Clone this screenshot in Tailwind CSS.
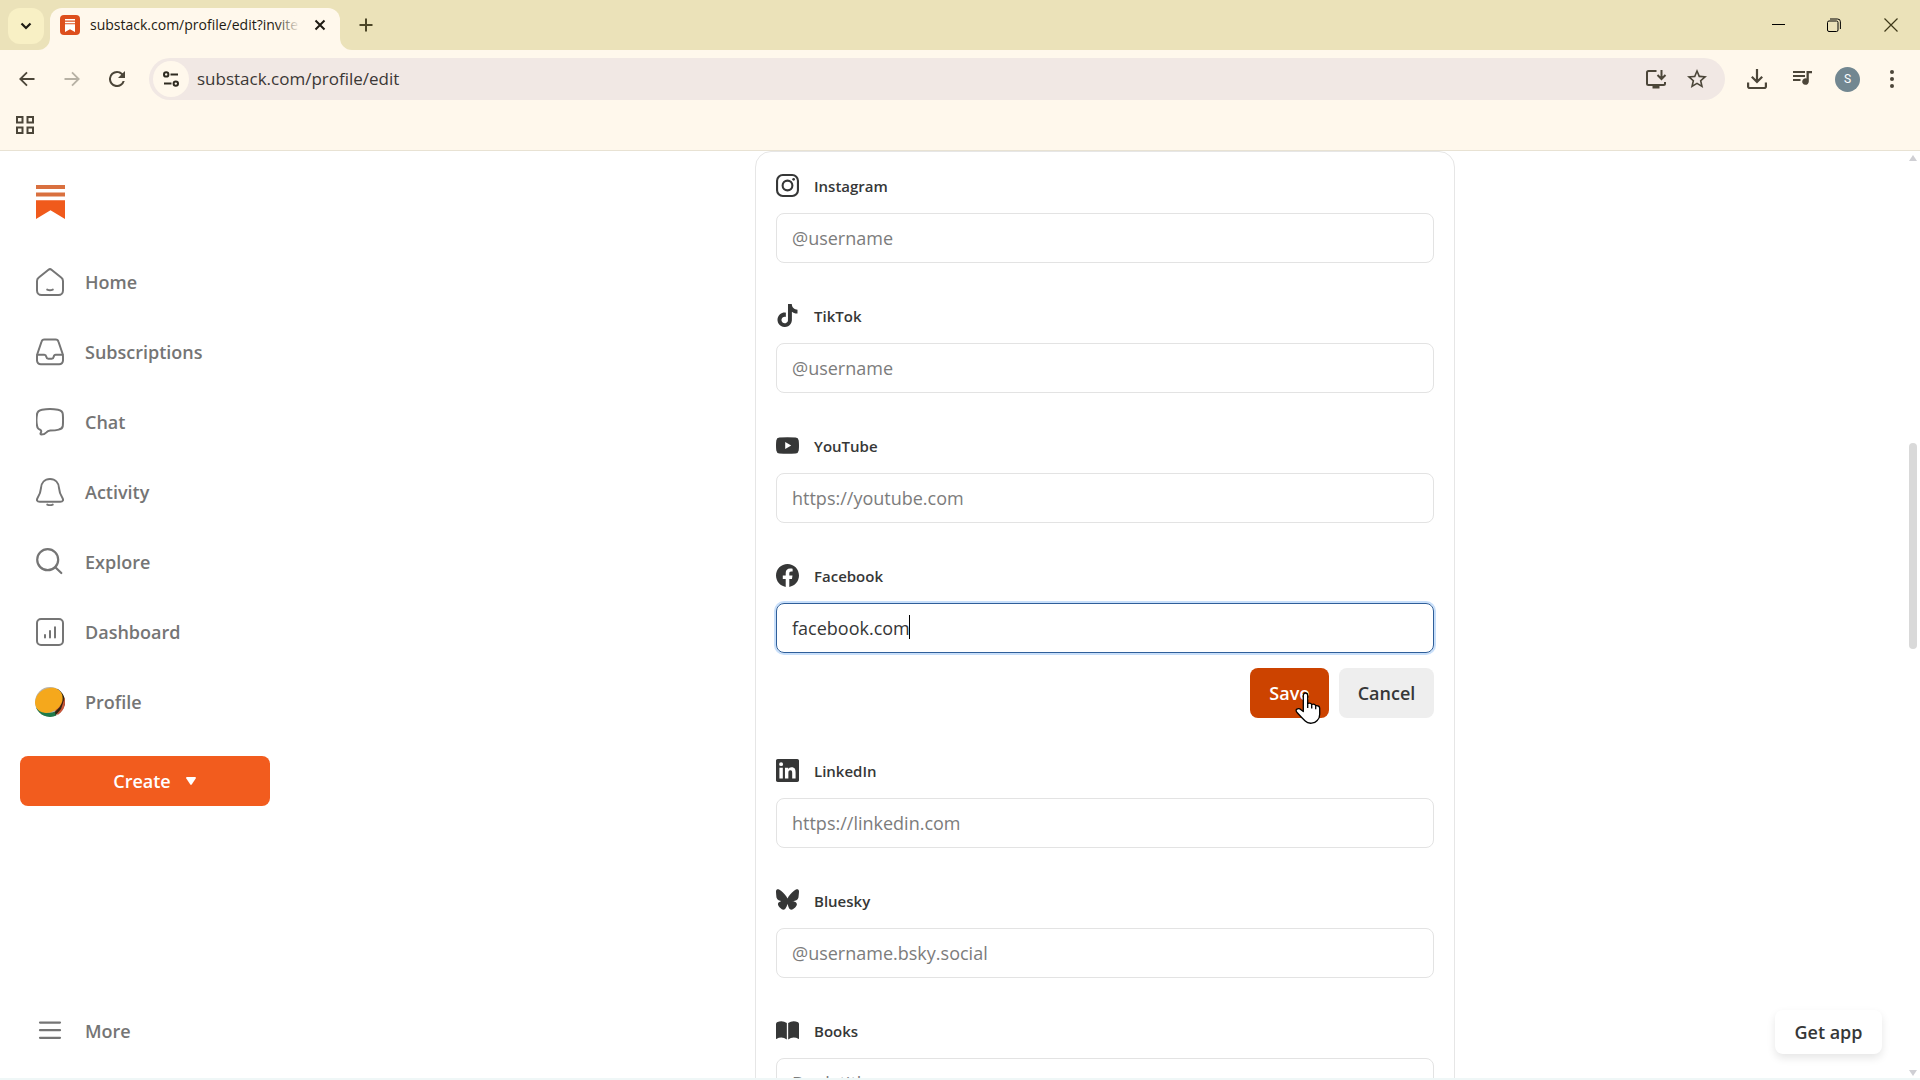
<!DOCTYPE html>
<html lang="en">
<head>
  <meta charset="UTF-8">
  <meta name="viewport" content="width=device-width, initial-scale=1.0">
  <title>Edit profile - Substack</title>
  <script src="https://cdn.jsdelivr.net/npm/@tailwindcss/browser@4"></script>
</head>
<body class="flex flex-col h-screen overflow-hidden bg-white text-[#363737] font-['Open_Sans',sans-serif]">
  <!-- Tab strip -->
  <div class="flex items-end h-[50px] shrink-0 bg-[#ebe2b9] text-[#1e1b13]">
    <button aria-label="Search tabs" class="flex items-center justify-center w-9 h-9 ml-2 mb-[6px] rounded-xl bg-[#f8f0c5]">
      <svg class="w-3 h-3" viewBox="0 0 12 12" fill="none" stroke="currentColor" stroke-width="2.2"><path d="M1.5 3.5 6 8l4.500-4.500"/></svg>
    </button>
    <div class="relative flex items-center h-[42px] w-[290px] ml-[6px] px-[10px] pb-2 rounded-t-xl bg-[#fff8ec]">
      <!-- Curved feet of the active tab -->
      <svg class="absolute bottom-0 -left-3 w-3 h-3" viewBox="0 0 12 12" fill="#fff8ec"><path d="M12 0v12H0A12 12 0 0 0 12 0z"/></svg>
      <svg class="absolute bottom-0 -right-3 w-3 h-3" viewBox="0 0 12 12" fill="#fff8ec"><path d="M0 0v12h12A12 12 0 0 1 0 0z"/></svg>
      <svg class="w-5 h-5 shrink-0" viewBox="0 0 20 20"><rect width="20" height="20" rx="4" fill="#dd4f1d"/><path d="M5 4h10v1.500H5zM5 6.700h10v1.500H5zM5 9.300h10V17l-5-2.800L5 17z" fill="#fff"/></svg>
      <div class="relative w-[210px] ml-[10px] text-sm whitespace-nowrap overflow-hidden">substack.com/profile/edit?invite
        <span class="absolute inset-y-0 right-0 w-6 bg-linear-to-r from-[#fff8ec]/0 to-[#fff8ec]"></span>
      </div>
      <button aria-label="Close tab" class="flex items-center justify-center w-5 h-5 ml-[10px]">
        <svg class="w-3 h-3" viewBox="0 0 12 12" stroke="currentColor" stroke-width="2"><path d="M1.500 1.500l9 9M10.500 1.500l-9 9"/></svg>
      </button>
    </div>
    <button aria-label="New tab" class="flex items-center justify-center w-9 h-9 ml-2 mb-[7px]">
      <svg class="w-[14px] h-[14px]" viewBox="0 0 14 14" stroke="#4c4628" stroke-width="2"><path d="M7 .5v13M.5 7h13"/></svg>
    </button>
    <div class="flex items-center h-full ml-auto text-black">
      <button aria-label="Minimize" class="flex items-center justify-center w-14 h-12"><svg class="w-[13px] h-[13px]" viewBox="0 0 13 13" stroke="currentColor"><path d="M0 5.500h13"/></svg></button>
      <button aria-label="Restore" class="flex items-center justify-center w-14 h-12"><svg class="w-[14px] h-[14px]" viewBox="0 0 14 14" fill="none" stroke="currentColor"><rect x=".5" y="3" width="10.500" height="10.500" rx="1.500"/><path d="M3 1h7.500A2.800 2.800 0 0 1 13.400 3.800V11"/></svg></button>
      <button aria-label="Close" class="flex items-center justify-center w-[58px] h-12"><svg class="w-[14px] h-[14px]" viewBox="0 0 14 14" stroke="#3e3818" stroke-width="1.200"><path d="M.5.5l13 13M13.500.5l-13 13"/></svg></button>
    </div>
  </div>

  <!-- Toolbar -->
  <div class="flex items-center h-[58px] shrink-0 pl-[13px] pr-4 bg-[#fff8ec] text-[#4c4639]">
    <button aria-label="Back" class="w-7 h-7 flex items-center justify-center"><svg class="w-4 h-4" viewBox="0 0 16 16" fill="none" stroke="currentColor" stroke-width="1.800"><path d="M15.500 8H1.800M8 1.300 1.300 8 8 14.700"/></svg></button>
    <button aria-label="Forward" class="w-7 h-7 ml-[17px] flex items-center justify-center"><svg class="w-4 h-4" viewBox="0 0 16 16" fill="none" stroke="#b7b1a4" stroke-width="1.800"><path d="M.5 8h13.700M8 1.300 14.700 8 8 14.700"/></svg></button>
    <button aria-label="Reload" class="w-7 h-7 ml-[17px] flex items-center justify-center"><svg class="w-4 h-4" viewBox="4 4 16 16" fill="currentColor"><path d="M17.650 6.350A7.958 7.958 0 0 0 12 4a8 8 0 1 0 7.730 10h-2.080A6 6 0 1 1 12 6c1.660 0 3.140.69 4.220 1.780L13 11h7V4l-2.350 2.350z"/></svg></button>
    <div class="flex items-center flex-1 h-[42px] ml-[18px] pl-1 pr-[18px] rounded-full bg-[#f1e8e4]">
      <button aria-label="Site information" class="flex items-center justify-center w-9 h-9 rounded-full bg-[#fff8ec]">
        <svg class="w-4 h-4" viewBox="0 0 16 16" fill="none" stroke="#2e2a20" stroke-width="2"><circle cx="3.200" cy="3.400" r="2.200"/><path d="M7.500 3.400H15M1 12.600h7.500"/><circle cx="12.800" cy="12.600" r="2.200"/></svg>
      </button>
      <label for="address" class="sr-only">Address</label>
      <input id="address" type="text" value="substack.com/profile/edit" class="flex-1 ml-2 text-[17px] text-[#3b3735] bg-transparent outline-none">
      <button aria-label="Install app" class="mr-5"><svg class="w-[22px] h-5 block" viewBox="0 0 22 20" fill="none" stroke="currentColor" stroke-width="2"><path d="M11.500 2H3.500A1.500 1.500 0 0 0 2 3.500v11A1.500 1.500 0 0 0 3.500 16h15a1.500 1.500 0 0 0 1.500-1.500V13M16.500 1v8.500M12.500 6l4 4 4-4"/><path d="M7.500 18h7" stroke-width="3"/></svg></button>
      <button aria-label="Bookmark this tab"><svg class="w-5 h-5 block" viewBox="2 2 20 20" fill="currentColor"><path d="M22 9.240l-7.190-.62L12 2 9.190 8.630 2 9.240l5.460 4.730L5.820 21 12 17.270 18.180 21l-1.630-7.030L22 9.240zM12 15.400l-3.760 2.270 1-4.280-3.320-2.880 4.380-.38L12 6.100l1.710 4.040 4.380.38-3.320 2.880 1 4.280L12 15.400z"/></svg></button>
    </div>
    <button aria-label="Downloads" class="ml-[22px]"><svg class="w-5 h-5 block" viewBox="0 0 20 20" fill="none" stroke="currentColor" stroke-width="2.200"><path d="M10 0v12.500M4.800 7.800 10 13l5.200-5.200M1.100 13.500v3.900A1.500 1.500 0 0 0 2.600 19h14.800a1.500 1.500 0 0 0 1.500-1.600v-3.900"/></svg></button>
    <button aria-label="Media controls" class="ml-[26px]"><svg class="w-5 h-5 block" viewBox="0 0 20 20"><path d="M0 3h12M0 7h12M0 11h7.500" stroke="currentColor" stroke-width="2"/><path d="M13.500 2H19v2.200h-3.200v8.300a3.300 3.300 0 1 1-2.300-3.100z" fill="currentColor"/></svg></button>
    <button class="flex items-center justify-center w-[25px] h-[25px] ml-[22px] rounded-full bg-[#728791] text-white text-xs font-['Roboto',sans-serif]">S</button>
    <button aria-label="Menu" class="ml-[30px] mr-[10px]"><svg class="w-1 h-[18px] block" viewBox="0 0 4 18" fill="currentColor"><circle cx="2" cy="2" r="2"/><circle cx="2" cy="9" r="2"/><circle cx="2" cy="16" r="2"/></svg></button>
  </div>

  <!-- Bookmarks bar -->
  <div class="flex items-center h-[43px] shrink-0 px-4 pb-[9px] bg-[#fff8ec] border-b border-[#e8e2d3]">
    <button aria-label="Apps"><svg class="w-[18px] h-[18px] block" viewBox="0 0 18 18" fill="none" stroke="#4c4639" stroke-width="2"><path d="M1 1h5.500v5.500H1zM11.500 1H17v5.500h-5.500zM1 11.500h5.500V17H1zM11.500 11.500H17V17h-5.500z"/></svg></button>
  </div>

  <!-- Page -->
  <div class="relative flex flex-1 min-h-0">
    <aside class="flex flex-col w-[304px] shrink-0 pl-5 pr-[34px] pt-[34px] pb-[22px] text-lg font-semibold text-[#757575]">
      <a href="#" aria-label="Substack" class="ml-4 mb-7"><svg class="w-[29px] h-[34px]" viewBox="0 0 29 34" fill="#f05a1c"><path d="M0 0h29v4H0zM0 7.500h29v4H0z" fill="#d9703f"/><path d="M0 15.200h29V34L14.500 25.200 0 34z"/></svg></a>
      <nav class="flex flex-col">
        <a href="#" class="flex items-center h-[70px] pl-4 gap-[21px]"><svg class="w-7 h-7" viewBox="0 0 28 28" fill="none" stroke="currentColor" stroke-width="2" stroke-linecap="round" stroke-linejoin="round"><path d="M12.500 1.700a2.400 2.400 0 0 1 3 0l9.700 7.800A4.500 4.500 0 0 1 27 13v9.500a4.500 4.500 0 0 1-4.500 4.500h-17A4.500 4.500 0 0 1 1 22.500V13a4.500 4.500 0 0 1 1.800-3.500z"/><path d="M11.200 21.600q2.800 1.400 5.600 0"/></svg>Home</a>
        <a href="#" class="flex items-center h-[70px] pl-4 gap-[21px]"><svg class="w-7 h-7" viewBox="0 0 28 28" fill="none" stroke="currentColor" stroke-width="2" stroke-linecap="round" stroke-linejoin="round"><path d="M8.500 1.500h11a3 3 0 0 1 3 2.200l4 11.800q.5 1.500.5 3v4A3.800 3.800 0 0 1 23.200 26.300H4.800A3.800 3.800 0 0 1 1 22.500v-4q0-1.500.5-3l4-11.800a3 3 0 0 1 3-2.200z"/><path d="M1.300 16.700h7q1.600 0 2 2t2 2h3.400q1.600 0 2-2t2-2h7"/></svg>Subscriptions</a>
        <a href="#" class="flex items-center h-[70px] pl-4 gap-[21px]"><svg class="w-7 h-7" viewBox="0 0 28 28" fill="none" stroke="currentColor" stroke-width="2" stroke-linecap="round" stroke-linejoin="round"><path d="M6 1.700q8-1.400 16 0 4.500 1 4.800 4.300.5 6 0 12-.5 3-4 3.600-3.500.8-8.600 1-2.500.2-3.800 1.700-2 2.200-5.200 2.200-1.200-.2-.5-1.500Q5.800 23 4.600 22 1.400 21 1.100 18-.2 12 1.100 6 1.500 2.700 6 1.700z"/></svg>Chat</a>
        <a href="#" class="flex items-center h-[70px] pl-4 gap-[21px]"><svg class="w-7 h-7" viewBox="0 0 28 28" fill="none" stroke="currentColor" stroke-width="2" stroke-linecap="round" stroke-linejoin="round"><path d="M14 1C8.500 1 5.300 5 5 10c-.3 4-1 6-3.200 9.500C.2 22 1 23.800 3.800 23.800h20.400c2.800 0 3.600-1.800 2-4.300C24 16 23.300 14 23 10c-.3-5-3.500-9-9-9z"/><path d="M11.300 26.600q2.700 1.200 5.400 0"/></svg>Activity</a>
        <a href="#" class="flex items-center h-[70px] pl-4 gap-[21px]"><svg class="w-7 h-7" viewBox="0 0 28 28" fill="none" stroke="currentColor" stroke-width="2.200" stroke-linecap="round"><circle cx="11.700" cy="11.700" r="10.500"/><path d="M19.300 19.200 25.300 25"/></svg>Explore</a>
        <a href="#" class="flex items-center h-[70px] pl-4 gap-[21px]"><svg class="w-7 h-7" viewBox="0 0 28 28" fill="none" stroke="currentColor" stroke-width="2" stroke-linecap="round"><rect x="1" y="1" width="26" height="26" rx="4"/><path d="M9 17v2.500M14 13v6.500M19 9.200v10.300"/></svg>Dashboard</a>
        <a href="#" class="flex items-center h-[70px] pl-[15px] gap-5">
          <svg class="w-[30px] h-[30px]" viewBox="0 0 30 30"><defs><clipPath id="avatar"><circle cx="15" cy="15" r="15"/></clipPath></defs><g clip-path="url(#avatar)"><rect width="30" height="30" fill="#b9b4aa"/><path d="M22 0h8v18l-6 6z" fill="#2c2414"/><path d="M30 10v14l-7 4-3-5z" fill="#c8553a"/><path d="M28 9q0 12-12 18l4 2 6-7 3-9z" fill="#33240f"/><path d="M0 20q9 8 20 5l1 5H0z" fill="#1f7a4b"/><ellipse cx="13.800" cy="13.300" rx="14.500" ry="11.800" transform="rotate(-32 13.800 13.300)" fill="#f5a81c"/></g></svg>Profile</a>
      </nav>
      <button class="flex items-center justify-center h-[50px] mt-[19px] pl-[19px] gap-[15px] rounded-lg bg-[#f25c1e] text-white">Create
        <svg class="w-[10px] h-2" viewBox="0 0 10 8" fill="currentColor"><path d="M1 0h8q1.400.3.700 1.500L5.700 7.500q-.7.800-1.400 0L.3 1.500Q-.4.300 1 0z"/></svg>
      </button>
      <button class="flex items-center mt-auto h-[50px] pl-4 gap-[21px]"><svg class="w-7 h-7" viewBox="0 0 28 28" stroke="currentColor" stroke-width="2.200" stroke-linecap="round"><path d="M4 5.600h20M4 13.200h20M4 20.800h20"/></svg>More</button>
    </aside>

    <main class="flex-1 min-w-0 overflow-hidden">
      <form class="flex flex-col w-[700px] mx-auto px-5 py-[22px] gap-[41px] border border-[#e6e6e6] rounded-2xl">
        <div class="flex flex-col gap-[15px]">
          <label for="instagram" class="flex items-start h-6 gap-[15px] text-[15px]/6 font-semibold"><svg class="w-[23px] h-[23px]" viewBox="0 0 24 24" fill="none" stroke="currentColor" stroke-width="2.200"><rect x="1.100" y="1.100" width="21.800" height="21.800" rx="6"/><circle cx="12" cy="12" r="5.100"/><circle cx="18.400" cy="5.600" r="1.400" fill="currentColor" stroke="none"/></svg>Instagram</label>
          <input id="instagram" type="text" placeholder="@username" class="h-[50px] px-[15px] text-lg border border-[#e3e3e3] rounded-lg outline-none placeholder:text-[#7c7c7c]">
        </div>
        <div class="flex flex-col gap-[15px]">
          <label for="tiktok" class="flex items-start h-6 gap-[15px] text-[15px]/6 font-semibold"><svg class="w-[23px] h-[23px]" viewBox="0 0 24 24" fill="currentColor"><path d="M12.525.02c1.310-.02 2.610-.01 3.910-.02.08 1.530.63 3.090 1.750 4.170 1.120 1.110 2.700 1.620 4.240 1.790v4.030c-1.440-.05-2.890-.35-4.200-.97-.57-.26-1.100-.59-1.620-.93-.01 2.920.01 5.840-.02 8.750-.08 1.400-.54 2.790-1.350 3.940-1.310 1.920-3.580 3.170-5.910 3.210-1.430.08-2.860-.31-4.080-1.030-2.020-1.190-3.440-3.370-3.650-5.710-.02-.5-.03-1-.01-1.490.18-1.900 1.120-3.720 2.580-4.960 1.660-1.440 3.980-2.130 6.150-1.720.02 1.480-.04 2.960-.04 4.440-.99-.32-2.150-.23-3.020.37-.63.41-1.110 1.040-1.360 1.750-.21.51-.15 1.070-.14 1.610.24 1.640 1.820 3.020 3.500 2.870 1.120-.01 2.190-.66 2.770-1.610.19-.33.4-.67.41-1.060.1-1.790.06-3.570.07-5.360.01-4.030-.01-8.050.02-12.070z"/></svg>TikTok</label>
          <input id="tiktok" type="text" placeholder="@username" class="h-[50px] px-[15px] text-lg border border-[#e3e3e3] rounded-lg outline-none placeholder:text-[#7c7c7c]">
        </div>
        <div class="flex flex-col gap-[15px]">
          <label for="youtube" class="flex items-start h-6 gap-[15px] text-[15px]/6 font-semibold"><svg class="w-[23px] h-[23px]" viewBox="0 0 24 24" fill="currentColor"><path fill-rule="evenodd" d="M3.500 3.700q8.500-.8 17 0 2.800.2 3.200 3 .6 5.300 0 10.600-.4 2.800-3.200 3-8.500.8-17 0-2.800-.2-3.200-3-.6-5.300 0-10.600.4-2.800 3.200-3zM9.600 8.400v7.200l6.300-3.600z"/></svg>YouTube</label>
          <input id="youtube" type="text" placeholder="https://youtube.com" class="h-[50px] px-[15px] text-lg border border-[#e3e3e3] rounded-lg outline-none placeholder:text-[#7c7c7c]">
        </div>
        <div class="flex flex-col gap-[15px]">
          <label for="facebook" class="flex items-start h-6 gap-[15px] text-[15px]/6 font-semibold"><svg class="w-[23px] h-[23px]" viewBox="0 0 24 24" fill="currentColor"><path d="M24 12.073c0-6.627-5.373-12-12-12s-12 5.373-12 12c0 5.990 4.388 10.954 10.125 11.854v-8.385H7.078v-3.470h3.047V9.430c0-3.007 1.792-4.669 4.533-4.669 1.312 0 2.686.235 2.686.235v2.953H15.830c-1.491 0-1.956.925-1.956 1.874v2.250h3.328l-.532 3.470h-2.796v8.385C19.612 23.027 24 18.062 24 12.073z"/></svg>Facebook</label>
          <div class="relative flex">
            <input id="facebook" type="text" value="facebook.com" class="w-full h-[50px] px-[15px] text-lg border border-[#2f5f9a] rounded-lg outline-none ring-2 ring-[#c8dffa]">
            <!-- Text cursor -->
            <span class="absolute left-[133px] top-3 w-px h-6 bg-black"></span>
          </div>
          <div class="flex justify-end gap-[10px]">
            <button type="button" class="relative w-[79px] h-[50px] rounded-lg bg-[#cc4300] text-white text-lg font-semibold">Save
              <!-- Hand pointer -->
              <svg class="absolute left-[45px] top-6 w-[26px] h-[33px]" viewBox="0 0 26 33" fill="#fff" stroke="#000" stroke-width="1.300" stroke-linejoin="round"><path d="M8.300 19.500V3.200a2.200 2.200 0 0 1 4.400 0v8.300q3-1.200 4 1 3-1 4 1.200 3.800-.5 4 2.500v6q0 4-2.500 6.300-2 2.300-5.500 2.700-4 .4-6.500-2.200Q6.500 25.500 2.500 21q-2.500-2.600-.6-3.900Q4 16 6.300 18z"/><path d="M12.700 11v5M16.700 12.500v4M20.700 13.700v3.500" fill="none"/></svg>
            </button>
            <button type="button" class="w-[95px] h-[50px] rounded-lg bg-[#eeeeee] text-lg font-semibold">Cancel</button>
          </div>
        </div>
        <div class="flex flex-col gap-[15px]">
          <label for="linkedin" class="flex items-start h-6 gap-[15px] text-[15px]/6 font-semibold"><svg class="w-[23px] h-[23px]" viewBox="0 0 24 24" fill="currentColor"><path d="M20.447 20.452h-3.554v-5.569c0-1.328-.027-3.037-1.852-3.037-1.853 0-2.136 1.445-2.136 2.939v5.667H9.351V9h3.414v1.561h.046c.477-.9 1.637-1.850 3.370-1.850 3.601 0 4.267 2.370 4.267 5.455v6.286zM5.337 7.433a2.062 2.062 0 0 1-2.063-2.065 2.064 2.064 0 1 1 2.063 2.065zm1.782 13.019H3.555V9h3.564v11.452zM22.225 0H1.771C.792 0 0 .774 0 1.729v20.542C0 23.227.792 24 1.771 24h20.451C23.200 24 24 23.227 24 22.271V1.729C24 .774 23.200 0 22.222 0h.003z"/></svg>LinkedIn</label>
          <input id="linkedin" type="text" placeholder="https://linkedin.com" class="h-[50px] px-[15px] text-lg border border-[#e3e3e3] rounded-lg outline-none placeholder:text-[#7c7c7c]">
        </div>
        <div class="flex flex-col gap-[15px]">
          <label for="bluesky" class="flex items-start h-6 gap-[15px] text-[15px]/6 font-semibold"><svg class="w-[23px] h-[23px]" viewBox="0 1 24 24" fill="currentColor"><path d="M12 10.800c-1.087-2.114-4.046-6.053-6.798-7.995C2.566.944 1.561 1.266.902 1.565.139 1.908 0 3.080 0 3.768c0 .69.378 5.650.624 6.479.815 2.736 3.713 3.660 6.383 3.364-3.912.58-7.387 2.005-2.830 7.078 5.013 5.190 6.870-1.113 7.823-4.308.953 3.195 2.050 9.271 7.733 4.308 4.267-4.308 1.172-6.498-2.740-7.078 2.670.297 5.568-.628 6.383-3.364.246-.828.624-5.790.624-6.478 0-.69-.139-1.861-.902-2.206-.659-.298-1.664-.62-4.300 1.240C16.046 4.748 13.087 8.687 12 10.800z"/></svg>Bluesky</label>
          <input id="bluesky" type="text" placeholder="@username.bsky.social" class="h-[50px] px-[15px] text-lg border border-[#e3e3e3] rounded-lg outline-none placeholder:text-[#7c7c7c]">
        </div>
        <div class="flex flex-col gap-[15px]">
          <label for="books" class="flex items-start h-6 gap-[15px] text-[15px]/6 font-semibold"><svg class="w-[23px] h-[23px]" viewBox="0 0 24 24" fill="currentColor"><path d="M11.300 4.300v17Q6 17.600.3 20.900q-.3 0-.3-.4V5.200Q.1 4 1 3.500 6.500 1 11.300 4.300zM12.700 4.300v17q5.300-3.700 11-.4.3 0 .3-.4V5.200q-.1-1.200-1-1.700-5.500-2.500-10.300.8z"/></svg>Books</label>
          <input id="books" type="text" placeholder="Book title" class="h-[50px] px-[15px] text-lg border border-[#e3e3e3] rounded-lg outline-none placeholder:text-[#7c7c7c]">
        </div>
      </form>
    </main>

    <!-- Scroll bar -->
    <div class="flex flex-col items-center w-[14px] shrink-0 pt-1 pb-[2px]">
      <svg class="w-2 h-[6px]" viewBox="0 0 8 6" fill="#cfcfd4"><path d="M4 0l4 6H0z"/></svg>
      <div class="w-2 h-[206px] mt-[282px] rounded-full bg-[#d9d9d9]"></div>
      <svg class="w-2 h-[6px] mt-auto" viewBox="0 0 8 6" fill="#cfcfd4"><path d="M0 0h8L4 6z"/></svg>
    </div>

    <button class="absolute right-[38px] bottom-6 w-[107px] h-11 rounded-lg bg-white text-lg font-semibold shadow-[0_4px_8px_rgba(0,0,0,0.1)]">Get app</button>
  </div>
  <div class="h-[2px] shrink-0 bg-[#eff7f7]"></div>
</body>
</html>
